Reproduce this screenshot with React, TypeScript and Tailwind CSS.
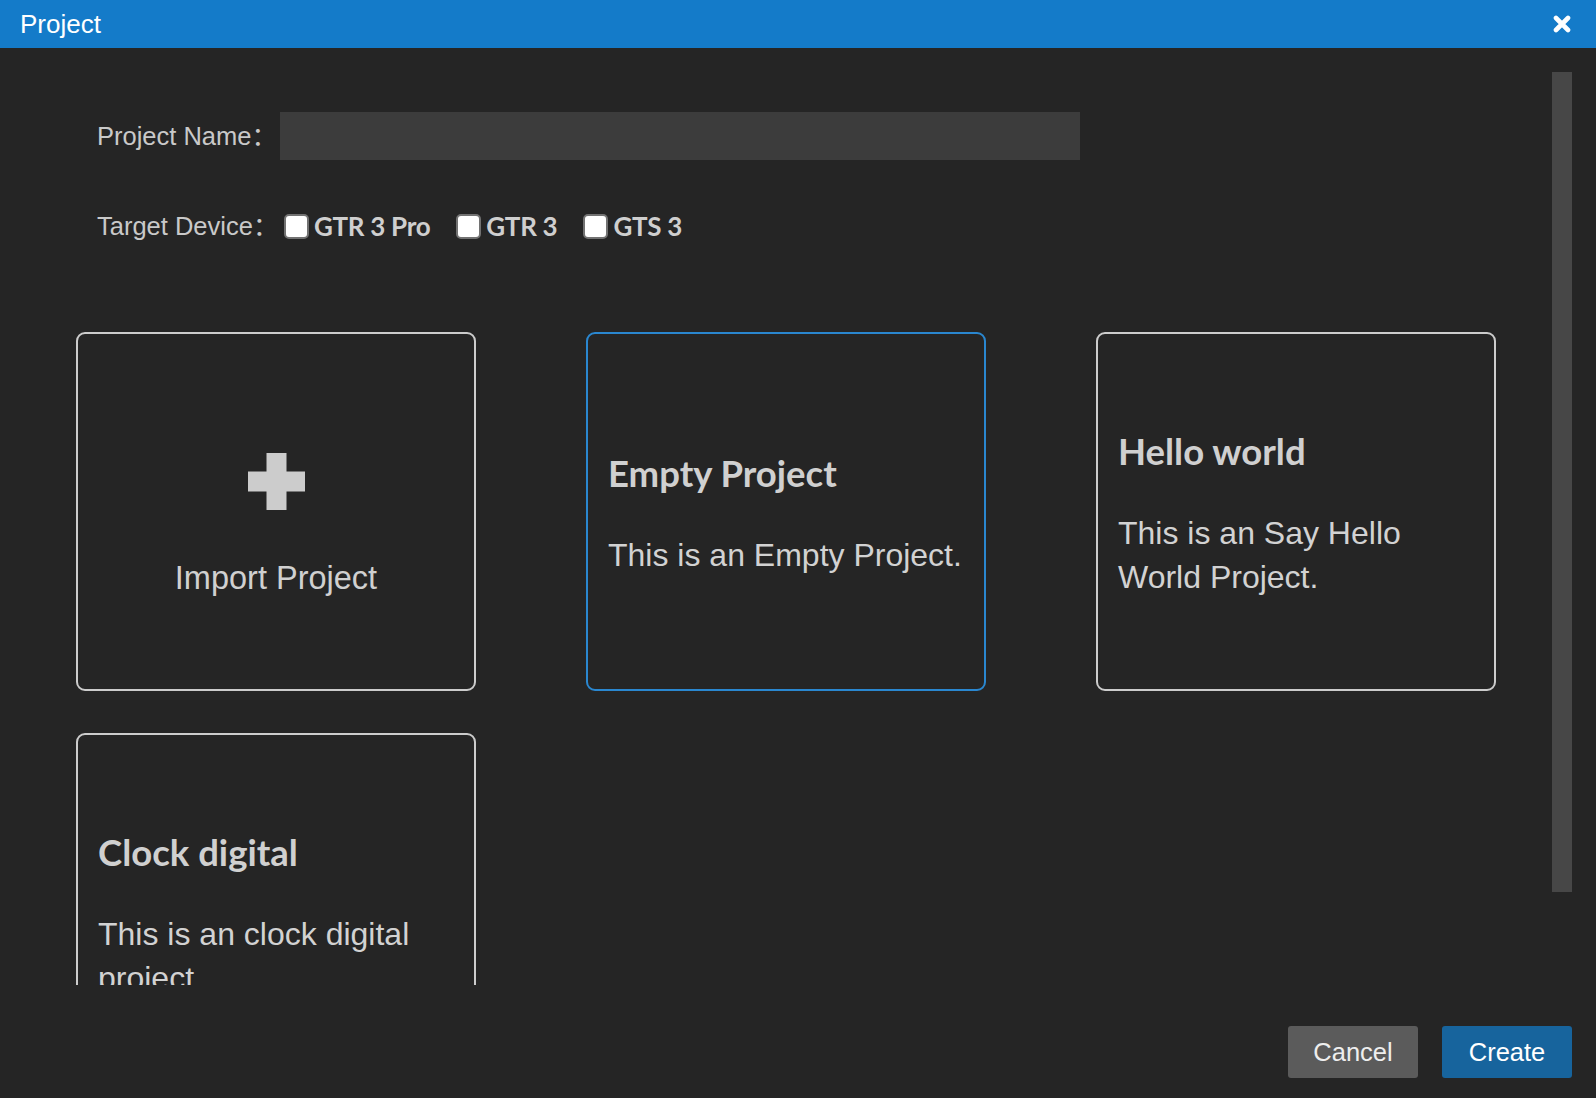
import React, { useState } from 'react';

type Template = {
  id: string;
  title: string;
  description: string;
};

const templates: Template[] = [
  { id: 'empty', title: 'Empty Project', description: 'This is an Empty Project.' },
  { id: 'hello', title: 'Hello world', description: 'This is an Say Hello World Project.' },
  { id: 'clock', title: 'Clock digital', description: 'This is an clock digital project.' },
];

const devices = ['GTR 3 Pro', 'GTR 3', 'GTS 3'];

const sans = "font-['Liberation_Sans',Arial,Helvetica,sans-serif]";
const lato = "font-['Lato','Noto_Sans',sans-serif]";

const App: React.FC = () => {
  const [name, setName] = useState('');
  const [selected, setSelected] = useState('empty');
  const [checked, setChecked] = useState<Record<string, boolean>>({});

  return (
    <div className={`w-[1596px] h-[1098px] bg-[#252525] flex flex-col overflow-hidden ${sans}`}>
      {/* Title bar */}
      <div className="h-[48px] shrink-0 bg-[#147bc9] flex items-center justify-between pl-[20px] pr-[25px]">
        <span className="text-[26px] leading-[48px] text-white">Project</span>
        <button className="w-[18px] h-[18px] flex items-center justify-center">
          <svg width="18" height="18" viewBox="0 0 18 18">
            <path d="M3 3 L15 15 M15 3 L3 15" stroke="#ffffff" strokeWidth="4.6" strokeLinecap="round" />
          </svg>
        </button>
      </div>

      {/* Body - scrollable */}
      <div className="relative h-[937px] shrink-0 overflow-hidden">
        <div className="px-[76px] pt-[64px]">
          {/* Project name */}
          <div className="flex items-center pl-[21px]">
            <label className="w-[183px] text-[25.5px] text-[#c9c9c9] font-['Liberation_Sans','Noto_Sans_CJK_SC',sans-serif]">
              Project Name：
            </label>
            <input
              value={name}
              onChange={e => setName(e.target.value)}
              className="w-[800px] h-[48px] bg-[#3c3c3c] text-[22px] text-[#dddddd] px-3 outline-none border-none"
            />
          </div>

          {/* Target device */}
          <div className="flex items-center h-[48px] mt-[42px] pl-[21px]">
            <label className="w-[187px] text-[25.5px] text-[#c9c9c9] font-['Liberation_Sans','Noto_Sans_CJK_SC',sans-serif]">
              Target Device：
            </label>
            <div className="flex items-center gap-[26px]">
              {devices.map(d => (
                <label key={d} className="flex items-center gap-[5px] cursor-pointer">
                  <input
                    type="checkbox"
                    checked={!!checked[d]}
                    onChange={() => setChecked({ ...checked, [d]: !checked[d] })}
                    className="appearance-none w-[25px] h-[25px] rounded-[5px] bg-white border-2 border-[#727272] checked:bg-[#147bc9] m-0"
                  />
                  <span className={`${lato} font-bold text-[26px] tracking-[-0.3px] text-[#cfcfcf]`}>{d}</span>
                </label>
              ))}
            </div>
          </div>

          {/* Templates */}
          <div className="grid grid-cols-[repeat(3,400px)] gap-x-[110px] gap-y-[42px] mt-[82px]">
            <button className="h-[359px] rounded-[9px] border-2 border-[#cccccc] flex flex-col items-center justify-center pt-[28px]">
              <svg width="57" height="57" viewBox="0 0 57 57">
                <rect x="18.5" y="0" width="20" height="57" fill="#cccccc" />
                <rect x="0" y="18.5" width="57" height="20" fill="#cccccc" />
              </svg>
              <span className="mt-[48px] text-[32.5px] leading-[40px] text-[#d0d0d0]">Import Project</span>
            </button>

            {templates.map(t => (
              <button
                key={t.id}
                onClick={() => setSelected(t.id)}
                className={`h-[359px] rounded-[9px] border-2 flex flex-col justify-center text-left px-[20px] pt-[6px] ${
                  selected === t.id ? 'border-[#2a87d0]' : 'border-[#cccccc]'
                }`}
              >
                <h3 className={`${lato} font-bold text-[36.5px] leading-[1.2] text-[#d0d0d0]`}>{t.title}</h3>
                <p className="mt-[37px] text-[32px] leading-[44px] text-[#d2d2d2]">{t.description}</p>
              </button>
            ))}
          </div>
        </div>

        {/* Scrollbar thumb */}
        <div className="absolute right-[24px] top-[24px] w-[20px] h-[820px] bg-[#474747]" />
      </div>

      {/* Footer */}
      <div className="flex-1 flex justify-end items-start gap-[24px] pt-[41px] pr-[24px]">
        <button className="w-[130px] h-[52px] rounded-[3px] bg-[#5b5b5b] text-[25.5px] text-[#eeeeee]">Cancel</button>
        <button className="w-[130px] h-[52px] rounded-[3px] bg-[#17649d] text-[25.5px] text-white">Create</button>
      </div>
    </div>
  );
};

export default App;
